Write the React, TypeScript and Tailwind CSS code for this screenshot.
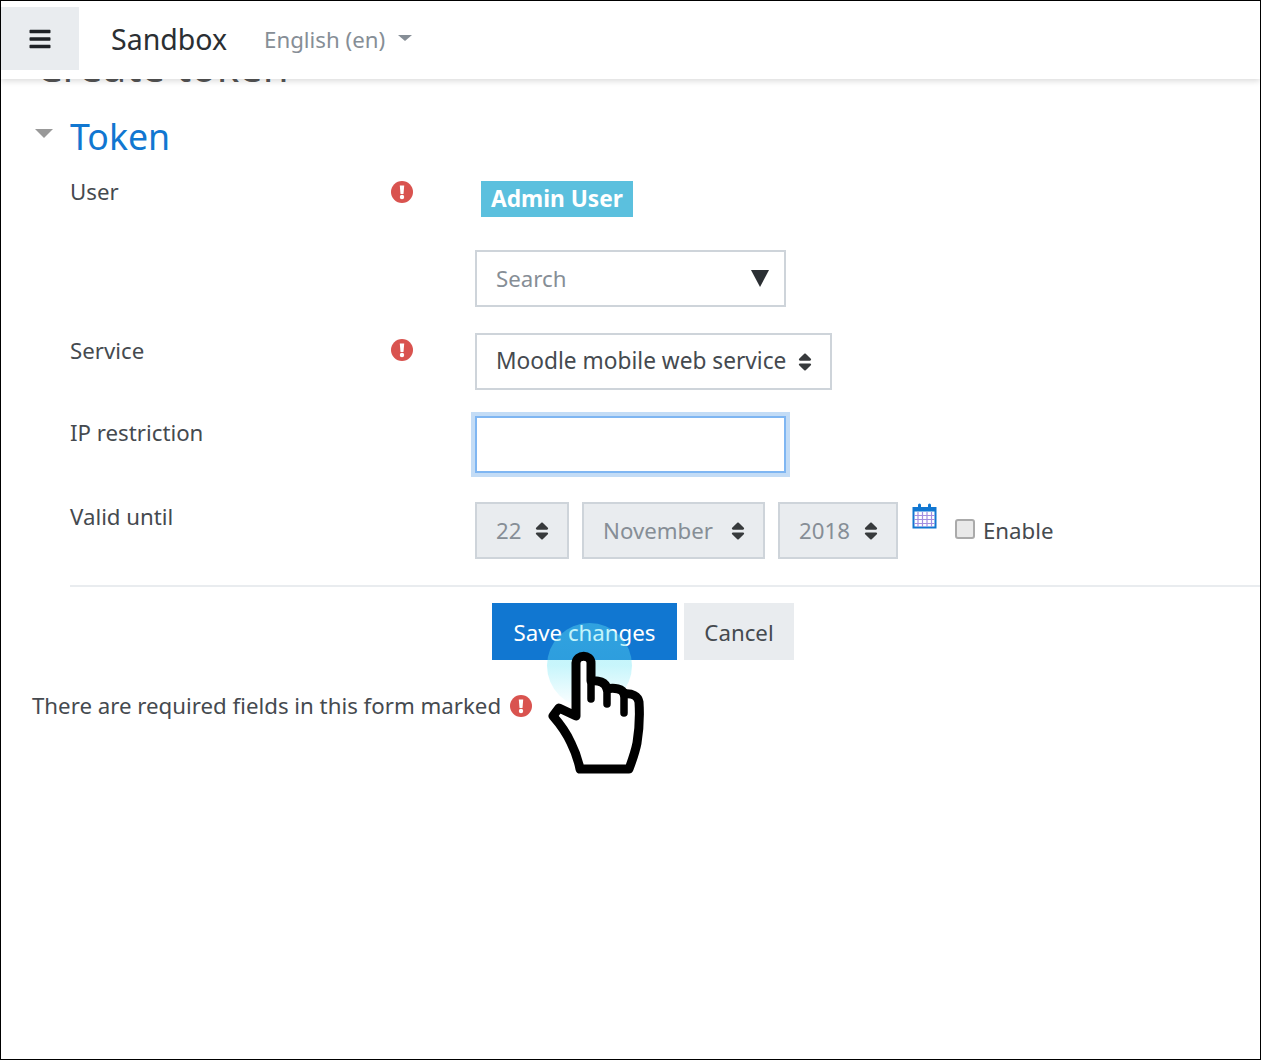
import { FaSort, FaBars } from "react-icons/fa";

const FONT = "font-['Noto_Sans','Open_Sans',sans-serif]";

function Req() {
  return (
    <svg width="22" height="22" viewBox="0 0 22 22" className="block">
      <circle cx="11" cy="11" r="11" fill="#d9534f" />
      <path d="M8.800 4.500h4.400l-.7 8.500h-3z" fill="#fff" />
      <circle cx="11" cy="16" r="2.200" fill="#fff" />
    </svg>
  );
}

function DateBox({ value, width }: { value: string; width: string }) {
  return (
    <div className={`${width} h-[57px] bg-[#e9ecef] border-2 border-[#ced4da] flex items-center justify-between pl-[19px] pr-[14px] text-[#868e96]`}>
      <span>{value}</span>
      <FaSort className="text-[22px] text-[#373a3c]" />
    </div>
  );
}

function Calendar() {
  return (
    <svg width="26" height="26" viewBox="0 0 26 26" className="block">
      <rect x="1.500" y="5" width="22" height="19.500" fill="#fff" stroke="#1177d1" strokeWidth="2" />
      <rect x="1" y="4.500" width="23" height="4" fill="#1177d1" />
      <rect x="6" y="0.500" width="3" height="6.500" rx="1.500" fill="#1177d1" />
      <rect x="16" y="0.500" width="3" height="6.500" rx="1.500" fill="#1177d1" />
      <path d="M6 9v15M10.500 9v15M15 9v15M19.500 9v15M2 12.500h21M2 16.500h21M2 20.500h21" stroke="#a28fe0" strokeWidth="1.200" />
    </svg>
  );
}

function Hand() {
  return (
    <div className="absolute left-[546px] top-[622px] w-[100px] h-[155px] pointer-events-none">
      <div className="w-[85px] h-[85px] rounded-full bg-gradient-to-b from-[#61e4f5]/40 via-[#61e4f5]/35 to-[#61e4f5]/0" />
      <svg width="100" height="155" viewBox="546 622 100 155" className="absolute left-0 top-0">
        <path
          d="M552 715 L558 707 L575 715 L575 662 C575.500 653 590 653 590 662 L590 680 C597 679 605 681 606 688 C613 686 622 688 623 693 C631 692 637 695 638 701 C639 716 638 730 636 742 C634 752 631 760 628 768 L579 768 C577 758 573 748 570 742 C566 733 559 723 552 715 Z"
          fill="#fff"
          stroke="#000"
          strokeWidth="9"
          strokeLinejoin="round"
          strokeLinecap="round"
        />
        <path d="M590 680 L590 698 M606 688 L606 703 M623 693 L623 712" stroke="#000" strokeWidth="7.500" strokeLinecap="round" fill="none" />
      </svg>
    </div>
  );
}

export default function App() {
  return (
    <div className={`${FONT} relative w-[1261px] h-[1060px] border border-black bg-white overflow-hidden text-[22.25px] text-[#454a4f]`}>
      <header className="relative z-10 h-[78px] bg-white shadow-[0_2px_6px_rgba(0,0,0,0.15)] flex items-start">
        <button className="w-[78px] h-[63px] mt-[6px] bg-[#e9ecef] flex items-center justify-center text-[#1d2125]">
          <FaBars className="text-[24px]" />
        </button>
        <div className="ml-[32px] mt-[18px] text-[28.500px] leading-[40px] text-[#2b2f33]">Sandbox</div>
        <div className="ml-[37px] mt-[20px] leading-[38px] text-[#868e96] flex items-center">
          English (en)
          <span className="ml-[13px] mb-[4px] w-0 h-0 border-x-[7px] border-x-transparent border-t-[6px] border-t-[#868e96]" />
        </div>
      </header>

      <h2 className="-mt-[41px] ml-[35px] text-[42px] leading-[56px] text-[#555]">Create token</h2>

      <div className="ml-[34px] mt-[15px] flex items-center h-[54px]">
        <span className="mb-[6px] w-0 h-0 border-x-[9px] border-x-transparent border-t-[9px] border-t-[#999]" />
        <span className="ml-[17px] text-[35.700px] leading-[54px] text-[#1177d1]">Token</span>
      </div>

      <div className="ml-[69px] flex mt-[18px]">
        <div className="w-[321px] leading-[22px]">User</div>
        <div className="w-[84px]"><Req /></div>
        <div>
          <span className="ml-[6px] inline-block h-[36px] w-[152px] bg-[#5bc0de] text-white font-bold text-[22.700px] leading-[36px] text-center">Admin User</span>
          <div className="mt-[33px] w-[311px] h-[57px] border-2 border-[#ced4da] flex items-center justify-between pl-[19px] pr-[15px] text-[#868e96]">
            <span>Search</span>
            <span className="w-0 h-0 border-x-[9px] border-x-transparent border-t-[17px] border-t-[#2b2f33]" />
          </div>
        </div>
      </div>

      <div className="ml-[69px] flex mt-[26px]">
        <div className="w-[321px] leading-[24px] pt-[6px]">Service</div>
        <div className="w-[84px] pt-[6px]"><Req /></div>
        <div className="w-[357px] h-[57px] border-2 border-[#ced4da] flex items-center justify-between pl-[19px] pr-[14px]">
          <span className="text-[22.700px]">Moodle mobile web service</span>
          <FaSort className="text-[22px] text-[#373a3c]" />
        </div>
      </div>

      <div className="ml-[69px] flex mt-[26px]">
        <div className="w-[405px] leading-[24px] pt-[5px]">IP restriction</div>
        <input className="w-[311px] h-[57px] bg-white border-2 border-[#7fb6f2] ring-4 ring-[#c3dcf6] outline-none" />
      </div>

      <div className="ml-[69px] flex mt-[29px]">
        <div className="w-[405px] leading-[24px] pt-[3px]">Valid until</div>
        <div className="flex gap-[13px]">
          <DateBox value="22" width="w-[94px]" />
          <DateBox value="November" width="w-[183px]" />
          <DateBox value="2018" width="w-[120px]" />
        </div>
        <div className="ml-[14px] mt-[1px]"><Calendar /></div>
        <div className="ml-[17px] mt-[17px] w-[20px] h-[20px] rounded-[3px] bg-[#e9e9e9] border-2 border-[#aaa]" />
        <div className="ml-[8px] mt-[16px] leading-[26px]">Enable</div>
      </div>

      <hr className="ml-[69px] mt-[26px] border-t-2 border-[#e9ecef]" />

      <div className="ml-[491px] mt-[16px] flex gap-[7px]">
        <button className="w-[185px] h-[57px] pt-[3px] bg-[#1177d1] text-white">Save changes</button>
        <button className="w-[110px] h-[57px] pt-[3px] bg-[#e9ecef]">Cancel</button>
      </div>

      <div className="ml-[31px] mt-[30px] flex items-center h-[32px]">
        There are required fields in this form marked
        <span className="ml-[9px] flex"><Req /></span>
      </div>

      <Hand />
    </div>
  );
}
